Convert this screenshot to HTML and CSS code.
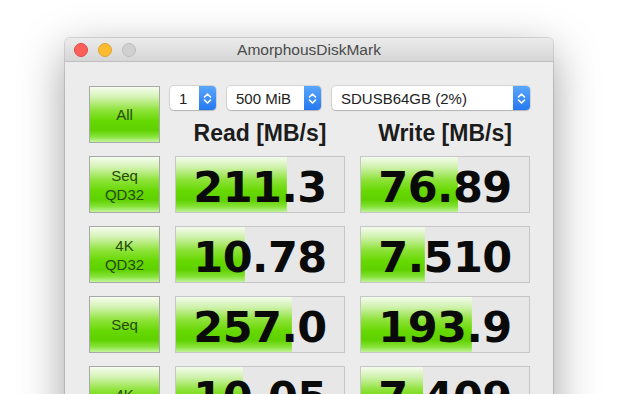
FILE: index.html
```html
<!DOCTYPE html>
<html lang="en">
<head>
  <meta charset="UTF-8" />
  <title>AmorphousDiskMark</title>
  <link rel="stylesheet" href="styles.css">
</head>
<body>
  <div class="window">
    <div class="titlebar">
      <div class="lights">
        <span class="light close"></span>
        <span class="light minimize"></span>
        <span class="light zoom"></span>
      </div>
      <div class="title">AmorphousDiskMark</div>
      <div></div>
    </div>

    <div class="content">
      <button class="test-btn">All</button>
      <div class="controls">
        <div class="selects">
          <div class="select sel-count">
            <span>1</span>
            <span class="stepper"><svg width="9" height="13" viewBox="0 0 9 13"><path d="M1.5 5 L4.5 2 L7.5 5 M1.5 8 L4.5 11 L7.5 8" fill="none" stroke="#fff" stroke-width="1.6" stroke-linecap="round" stroke-linejoin="round"/></svg></span>
          </div>
          <div class="select sel-size">
            <span>500 MiB</span>
            <span class="stepper"><svg width="9" height="13" viewBox="0 0 9 13"><path d="M1.5 5 L4.5 2 L7.5 5 M1.5 8 L4.5 11 L7.5 8" fill="none" stroke="#fff" stroke-width="1.6" stroke-linecap="round" stroke-linejoin="round"/></svg></span>
          </div>
          <div class="select sel-drive">
            <span>SDUSB64GB (2%)</span>
            <span class="stepper"><svg width="9" height="13" viewBox="0 0 9 13"><path d="M1.5 5 L4.5 2 L7.5 5 M1.5 8 L4.5 11 L7.5 8" fill="none" stroke="#fff" stroke-width="1.6" stroke-linecap="round" stroke-linejoin="round"/></svg></span>
          </div>
        </div>
        <div class="headers">
          <div>Read [MB/s]</div>
          <div>Write [MB/s]</div>
        </div>
      </div>

      <button class="test-btn">Seq<br>QD32</button>
      <div class="result" style="--fill: 66%"><span class="value">211.3</span></div>
      <div class="result" style="--fill: 58%"><span class="value">76.89</span></div>

      <button class="test-btn">4K<br>QD32</button>
      <div class="result" style="--fill: 41%"><span class="value">10.78</span></div>
      <div class="result" style="--fill: 38%"><span class="value">7.510</span></div>

      <button class="test-btn">Seq</button>
      <div class="result" style="--fill: 69%"><span class="value">257.0</span></div>
      <div class="result" style="--fill: 66%"><span class="value">193.9</span></div>

      <button class="test-btn">4K</button>
      <div class="result" style="--fill: 40%"><span class="value">10.05</span></div>
      <div class="result" style="--fill: 37%"><span class="value">7.409</span></div>
    </div>
  </div>
</body>
</html>
```

FILE: styles.css
```css
html, body {
  margin: 0;
  padding: 0;
  height: 100%;
  overflow: hidden;
  background-color: #fff;
  font-family: "Liberation Sans", Arial, sans-serif;
}

.window {
  margin: 38px 0 0 65px;
  width: 488px;
  height: 420px;
  background-color: #ececec;
  border-radius: 5px 5px 0 0;
  box-shadow: 0 14px 45px rgba(0, 0, 0, 0.38), 0 0 0 1px rgba(0, 0, 0, 0.12);
}

.titlebar {
  display: grid;
  grid-template-columns: 1fr auto 1fr;
  align-items: center;
  height: 23px;
  background: linear-gradient(to bottom, #ebebeb, #d6d6d6);
  border-bottom: 1px solid #bfbfbf;
  border-radius: 5px 5px 0 0;
}

.lights {
  display: flex;
  gap: 10px;
  padding-left: 9px;
}

.light {
  width: 12px;
  height: 12px;
  border-radius: 50%;
  border: 1px solid transparent;
}

.light.close {
  background-color: #fc605b;
  border-color: #de4a43;
}

.light.minimize {
  background-color: #fdbc2f;
  border-color: #dea230;
}

.light.zoom {
  background-color: #d0d0d0;
  border-color: #bcbcbc;
}

.title {
  font-size: 15.5px;
  color: #4a4a4a;
}

.content {
  display: grid;
  grid-template-columns: 71px 170px 170px;
  column-gap: 15px;
  row-gap: 13px;
  padding: 24px 23px 0 24px;
}

.test-btn {
  height: 57px;
  margin: 0;
  padding: 0;
  border: 1px solid #a9a9a9;
  background: linear-gradient(to bottom, #f6fcf0 0%, #d4f3b4 18%, #8fe33a 42%, #66d802 62%, #5fd100 78%, #86e33a 90%, #c4f59c 100%);
  font-family: "Liberation Sans", Arial, sans-serif;
  font-size: 15px;
  line-height: 19px;
  color: #254a08;
}

.controls {
  grid-column: span 2;
  display: flex;
  flex-direction: column;
}

.selects {
  display: flex;
  gap: 11px;
  margin-left: -5px;
}

.select {
  display: flex;
  align-items: center;
  justify-content: space-between;
  height: 24px;
  box-sizing: border-box;
  padding-left: 9px;
  background-color: #fff;
  border-radius: 4px;
  box-shadow: 0 0 0 1px rgba(0, 0, 0, 0.1), 0 1px 1px rgba(0, 0, 0, 0.15);
  font-size: 15px;
  color: #222;
}

.sel-count { width: 46px; }
.sel-size { width: 94px; }
.sel-drive { width: 198px; }

.stepper {
  display: flex;
  align-items: center;
  justify-content: center;
  width: 17px;
  height: 24px;
  border-radius: 0 4px 4px 0;
  background: linear-gradient(to bottom, #5aa6fb, #2579f0);
}

.headers {
  display: grid;
  grid-template-columns: 170px 170px;
  column-gap: 15px;
  margin-top: 13px;
  line-height: 20px;
}

.headers div {
  text-align: center;
  font-size: 23px;
  font-weight: bold;
  color: #1c1c1c;
}

.result {
  display: flex;
  align-items: center;
  justify-content: center;
  height: 57px;
  box-sizing: border-box;
  padding-top: 5px;
  border: 1px solid #c6c6c6;
  background-color: #e7e7e7;
  background-image: linear-gradient(to bottom, #f4fbee 0%, #d0f2ae 18%, #8de238 42%, #66d802 62%, #5fd100 78%, #84e236 90%, #c0f398 100%);
  background-size: var(--fill) 100%;
  background-repeat: no-repeat;
}

.value {
  font-family: "DejaVu Sans", Verdana, sans-serif;
  font-weight: bold;
  font-size: 43px;
  letter-spacing: -0.5px;
  color: #0a0a0a;
}
```
